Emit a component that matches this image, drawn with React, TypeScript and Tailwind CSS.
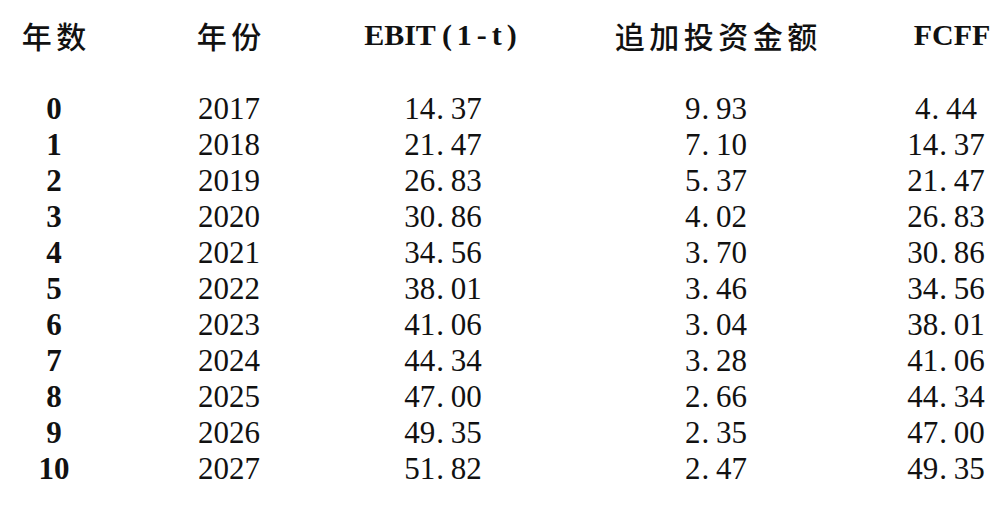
import React from "react";

const rows: [string, string, string, string, string][] = [
  ["0", "2017", "14.37", "9.93", "4.44"],
  ["1", "2018", "21.47", "7.10", "14.37"],
  ["2", "2019", "26.83", "5.37", "21.47"],
  ["3", "2020", "30.86", "4.02", "26.83"],
  ["4", "2021", "34.56", "3.70", "30.86"],
  ["5", "2022", "38.01", "3.46", "34.56"],
  ["6", "2023", "41.06", "3.04", "38.01"],
  ["7", "2024", "44.34", "3.28", "41.06"],
  ["8", "2025", "47.00", "2.66", "44.34"],
  ["9", "2026", "49.35", "2.35", "47.00"],
  ["10", "2027", "51.82", "2.47", "49.35"],
];

function Num({ v }: { v: string }) {
  return (
    <span className="inline-flex">
      {v.split("").map((c, i) =>
        c === "." ? (
          <span key={i} className="inline-block w-[0.5em] text-left pl-[1px]">
            .
          </span>
        ) : (
          <span key={i} className="inline-block w-[0.5em] text-center">
            {c}
          </span>
        )
      )}
    </span>
  );
}

const cols = "grid grid-cols-[108px_242px_186px_360px_100px]";

export default function App() {
  return (
    <div className="w-[1008px] h-[506px] bg-white text-[#111] overflow-hidden font-['Liberation_Serif','DejaVu_Serif',serif]">
      <div className={`${cols} pt-[15px] h-[55px] leading-[40px] text-[30px]`}>
        <div className="text-center tracking-[4.5px] pl-[4.5px] font-medium font-['Noto_Sans_CJK_SC',sans-serif]">
          年数
        </div>
        <div className="text-center tracking-[4.5px] pl-[4.5px] font-medium font-['Noto_Sans_CJK_SC',sans-serif]">
          年份
        </div>
        <div className="text-center whitespace-nowrap font-bold">
          <span>EBIT</span>
          <span className="tracking-[5px] pl-[6px]">(1-t)</span>
        </div>
        <div className="text-center tracking-[4.5px] pl-[4.5px] font-medium font-['Noto_Sans_CJK_SC',sans-serif]">
          追加投资金额
        </div>
        <div className="text-center font-bold pl-[12px]">FCFF</div>
      </div>
      <div className="mt-[36px] flex flex-col text-[31px]">
        {rows.map((r) => (
          <div key={r[0]} className={`${cols} h-[36px] leading-[36px]`}>
            <div className="text-center font-bold">
              <Num v={r[0]} />
            </div>
            <div className="text-center">
              <Num v={r[1]} />
            </div>
            <div className="text-center">
              <Num v={r[2]} />
            </div>
            <div className="text-center">
              <Num v={r[3]} />
            </div>
            <div className="text-center">
              <Num v={r[4]} />
            </div>
          </div>
        ))}
      </div>
    </div>
  );
}
